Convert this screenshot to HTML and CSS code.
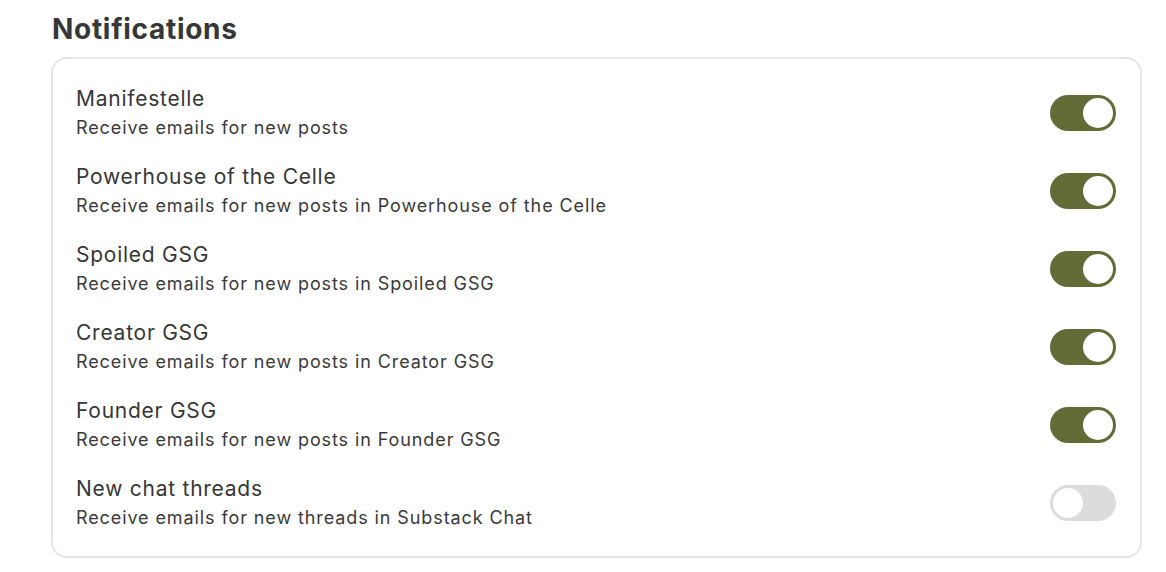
FILE: index.html
```html
<!DOCTYPE html>
<html>
<head>
<meta charset="utf-8">
<link rel="stylesheet" href="styles.css">
</head>
<body>
<div class="page">
  <h2 class="heading">Notifications</h2>
  <div class="card">
    <div class="row">
      <div class="text"><div class="title">Manifestelle</div><div class="sub">Receive emails for new posts</div></div>
      <span class="toggle on"><span class="knob"></span></span>
    </div>
    <div class="row">
      <div class="text"><div class="title">Powerhouse of the Celle</div><div class="sub">Receive emails for new posts in Powerhouse of the Celle</div></div>
      <span class="toggle on"><span class="knob"></span></span>
    </div>
    <div class="row">
      <div class="text"><div class="title">Spoiled GSG</div><div class="sub">Receive emails for new posts in Spoiled GSG</div></div>
      <span class="toggle on"><span class="knob"></span></span>
    </div>
    <div class="row">
      <div class="text"><div class="title">Creator GSG</div><div class="sub">Receive emails for new posts in Creator GSG</div></div>
      <span class="toggle on"><span class="knob"></span></span>
    </div>
    <div class="row">
      <div class="text"><div class="title">Founder GSG</div><div class="sub">Receive emails for new posts in Founder GSG</div></div>
      <span class="toggle on"><span class="knob"></span></span>
    </div>
    <div class="row">
      <div class="text"><div class="title">New chat threads</div><div class="sub">Receive emails for new threads in Substack Chat</div></div>
      <span class="toggle"><span class="knob"></span></span>
    </div>
  </div>
</div>
</body>
</html>
```
FILE: styles.css
```css
html, body { margin: 0; padding: 0; background: #fff; }
body { font-family: Inter, "Noto Sans", sans-serif; color: #363737; }
.page { padding: 10px 24px 0 51px; }
.heading { margin: 0 0 0 1px; font-size: 28px; font-weight: 700; line-height: 38px; letter-spacing: 0.7px; color: #363737; }
.card {
  margin-top: 9px;
  border: 2px solid #e6e6e6;
  border-radius: 16px;
  padding: 25px 24px 24px 23px;
  display: flex; flex-direction: column; gap: 20px;
}
.row { display: flex; align-items: center; justify-content: space-between; }
.title { font-size: 21px; line-height: 30px; font-weight: 400; letter-spacing: 0.75px; }
.sub { font-size: 18px; line-height: 28px; font-weight: 400; letter-spacing: 0.9px; color: #3a3a3a; }
.toggle {
  width: 66px; height: 36px; border-radius: 18px; background: #dcdcdc;
  display: flex; align-items: center; padding: 0 3px; box-sizing: border-box;
}
.toggle.on { background: #616c37; justify-content: flex-end; }
.knob { width: 30px; height: 30px; border-radius: 50%; background: #fff; }
```
